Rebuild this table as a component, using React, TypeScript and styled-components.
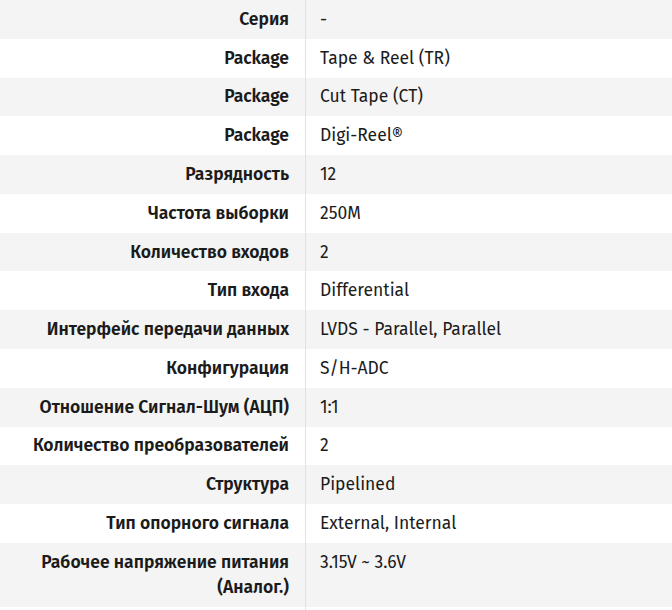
import React from "react";
import styled, { createGlobalStyle } from "styled-components";

const Global = createGlobalStyle`
  html, body { margin: 0; padding: 0; background: #ffffff; }
  body { font-family: "Fira Sans", "Lato", "Open Sans", sans-serif; }
`;

const Table = styled.div`
  display: grid;
  grid-template-columns: 306px 1fr;
  width: 672px;
  font-size: 17.5px;
  color: #1b1b1b;
`;

const Row = styled.div<{ $alt: boolean }>`
  display: contents;
  & > div {
    background: ${(p) => (p.$alt ? "#f4f4f4" : "#ffffff")};
  }
`;

const Label = styled.div`
  font-weight: 600;
  text-align: right;
  padding: 6.9px 16px 6.9px 8px;
  line-height: 25px;
  border-right: 1px solid #e2e2e2;
`;

const Value = styled.div`
  font-weight: 400;
  padding: 6.9px 14px 6.9px 14px;
  line-height: 25px;
`;

const rows: [string, string][] = [
  ["Серия", "-"],
  ["Package", "Tape & Reel (TR)"],
  ["Package", "Cut Tape (CT)"],
  ["Package", "Digi-Reel®"],
  ["Разрядность", "12"],
  ["Частота выборки", "250M"],
  ["Количество входов", "2"],
  ["Тип входа", "Differential"],
  ["Интерфейс передачи данных", "LVDS - Parallel, Parallel"],
  ["Конфигурация", "S/H-ADC"],
  ["Отношение Сигнал-Шум (АЦП)", "1:1"],
  ["Количество преобразователей", "2"],
  ["Структура", "Pipelined"],
  ["Тип опорного сигнала", "External, Internal"],
  ["Рабочее напряжение питания (Аналог.)", "3.15V ~ 3.6V"],
  ["", ""],
];

export default function App() {
  return (
    <>
      <Global />
      <Table>
        {rows.map(([l, v], i) => (
          <Row key={i} $alt={i % 2 === 0}>
            <Label>{l}</Label>
            <Value>{v}</Value>
          </Row>
        ))}
      </Table>
    </>
  );
}
